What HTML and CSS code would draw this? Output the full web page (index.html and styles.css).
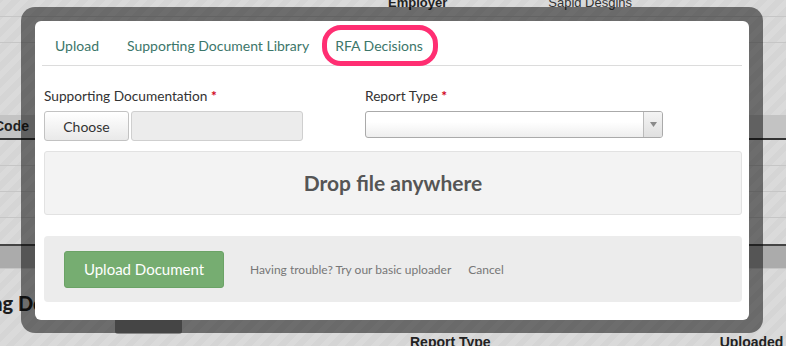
FILE: index.html
```html
<!DOCTYPE html>
<html lang="en">
<head>
    <meta charset="UTF-8">
    <title>Upload Supporting Document</title>
    <link rel="stylesheet" href="styles.css">
</head>
<body>
    <div class="page">
        <div class="info-row">
            <span class="info-label">Employer</span>
            <span class="info-value">Sapid Desgins</span>
        </div>
        <div class="info-row tall"></div>

        <div class="table">
            <div class="thead"><span>Code</span></div>
            <div class="trow"></div>
            <div class="trow"></div>
            <div class="trow"></div>
        </div>

        <div class="band"></div>

        <div class="section-head">
            <h2>Supporting Documents</h2>
            <span class="ghost-btn"></span>
        </div>

        <div class="doc-head">
            <span class="col-type">Report Type</span>
            <span class="col-date">Uploaded</span>
        </div>
    </div>

    <div class="backdrop">
        <div class="modal">
            <ul class="tabs">
                <li>Upload</li>
                <li>Supporting Document Library</li>
                <li class="highlight">RFA Decisions</li>
            </ul>

            <div class="fields">
                <div class="field doc-field">
                    <label>Supporting Documentation <span class="req">*</span></label>
                    <div class="file-input">
                        <button class="choose">Choose</button>
                        <span class="file-name"></span>
                    </div>
                </div>
                <div class="field">
                    <label>Report Type <span class="req">*</span></label>
                    <div class="select">
                        <span class="select-value"></span>
                        <span class="select-arrow">
                            <svg width="7" height="5" viewBox="0 0 7 5"><path d="M0 0h7L3.5 5z" fill="#8a8a8a"/></svg>
                        </span>
                    </div>
                </div>
            </div>

            <div class="dropzone">Drop file anywhere</div>

            <div class="actions">
                <button class="upload-btn">Upload Document</button>
                <a class="action-link trouble">Having trouble? Try our basic uploader</a>
                <a class="action-link cancel">Cancel</a>
            </div>
        </div>
    </div>
</body>
</html>
```

FILE: styles.css
```css
:root {
    --teal: #3c766a;
    --text: #333;
    --muted: #777;
    --green: #76ad71;
    --line: #dcdcdc;
}

* {
    margin: 0;
    padding: 0;
    box-sizing: border-box;
}

body {
    width: 786px;
    height: 346px;
    overflow: hidden;
    position: relative;
    font-family: Lato, "Liberation Sans", sans-serif;
    color: var(--text);
    background-color: #d8d8d8;
    background-image: repeating-linear-gradient(-45deg, #dadada 0, #dadada 6px, #d5d5d5 6px, #d5d5d5 12px);
}

/* page behind the dialog */

.page {
    font-family: "Liberation Sans", Arial, sans-serif;
    font-size: 13px;
}

.info-row {
    display: flex;
    height: 17px;
    border-bottom: 1px solid #c6c6c6;
}

.info-row.tall {
    height: 26px;
}

.info-label {
    margin-left: 388px;
    margin-top: -4px;
    line-height: 13px;
    font-weight: bold;
    color: #222;
}

.info-value {
    margin-left: 101px;
    margin-top: -4px;
    line-height: 13px;
    color: #333;
}

.table {
    margin-top: 72px;
}

.thead {
    height: 25px;
    background: #c3c3c3;
    border-bottom: 2px solid #333;
    font-weight: bold;
    font-size: 14px;
    line-height: 23px;
    color: #222;
}

.thead span {
    margin-left: -6px;
}

.trow {
    height: 26px;
    border-bottom: 1px solid #c6c6c6;
}

.band {
    margin-top: 26px;
    height: 25px;
    border-top: 2px solid #444;
    background: #ababab;
    border-bottom: 1px solid #c6c6c6;
}

.section-head {
    margin-top: 22px;
}

.section-head h2 {
    margin-left: -86px;
    font-family: Lato, sans-serif;
    font-size: 20px;
    line-height: 24px;
    font-weight: 900;
    color: #1e1e1e;
    white-space: nowrap;
}

.ghost-btn {
    display: block;
    margin: 1px 0 0 115px;
    width: 67px;
    height: 18px;
    background: #8a8a8a;
    border-radius: 3px;
}

.doc-head {
    display: flex;
    white-space: nowrap;
    font-weight: bold;
    font-size: 14px;
    color: #222;
}

.col-type {
    margin-left: 410px;
}

.col-date {
    margin-left: 229px;
}

/* dialog */

.backdrop {
    position: absolute;
    left: 21px;
    top: 7px;
    width: 742px;
    height: 326px;
    padding: 14px;
    border-radius: 14px;
    background: rgba(0, 0, 0, 0.5);
}

.modal {
    height: 299px;
    background: #fff;
    border-radius: 6px;
    padding: 0 7px 18px 9px;
}

.tabs {
    list-style: none;
    display: flex;
    margin-left: -2px;
    border-bottom: 1px solid var(--line);
}

.tabs li {
    position: relative;
    padding: 15px 14px 9px;
    font-size: 14px;
    line-height: 20px;
    color: var(--teal);
}

.tabs li:first-child {
    padding-left: 13px;
}

.tabs li:nth-child(3) {
    padding-left: 12px;
}

.tabs li.highlight::after {
    content: "";
    position: absolute;
    top: 4px;
    left: -1px;
    right: -1px;
    bottom: -1px;
    border: 5px solid #ff2e72;
    border-radius: 19px;
}

.fields {
    display: flex;
    margin-top: 22px;
}

.field label {
    display: block;
    font-size: 13.7px;
    line-height: 16px;
    margin-bottom: 7px;
}

.req {
    color: #d0021b;
    font-weight: bold;
}

.doc-field {
    width: 321px;
}

.file-input {
    display: flex;
    gap: 2px;
}

.choose {
    width: 85px;
    height: 30px;
    font-family: inherit;
    font-size: 14px;
    color: var(--text);
    background: linear-gradient(#fff, #e9e9e9);
    border: 1px solid #c2c2c2;
    border-radius: 3px;
}

.file-name {
    width: 172px;
    height: 30px;
    background: #ececec;
    border: 1px solid #cfcfcf;
    border-radius: 3px;
}

.select {
    display: flex;
    width: 298px;
    height: 27px;
    border: 1px solid #aaa;
    border-radius: 3px;
    background: linear-gradient(#fff 40%, #eee);
}

.select-value {
    flex: 1;
}

.select-arrow {
    width: 19px;
    display: flex;
    align-items: center;
    justify-content: center;
    border-left: 1px solid #bbb;
    background: linear-gradient(#f4f4f4, #e0e0e0);
    border-radius: 0 2px 2px 0;
}

.dropzone {
    margin-top: 10px;
    height: 64px;
    background: #f3f3f3;
    border: 1px solid #e2e2e2;
    border-radius: 3px;
    font-size: 21px;
    font-weight: bold;
    line-height: 62px;
    text-align: center;
    color: #555;
}

.actions {
    display: flex;
    align-items: center;
    margin-top: 21px;
    height: 66px;
    padding: 0 20px;
    background: #ececec;
    border-radius: 4px;
}

.upload-btn {
    width: 160px;
    height: 37px;
    font-family: inherit;
    font-size: 15px;
    color: #fff;
    background: var(--green);
    border: 1px solid #6ba366;
    border-radius: 3px;
}

.action-link {
    font-size: 12px;
    color: var(--muted);
}

.trouble {
    margin-left: 26px;
}

.cancel {
    margin-left: 17px;
}
```
